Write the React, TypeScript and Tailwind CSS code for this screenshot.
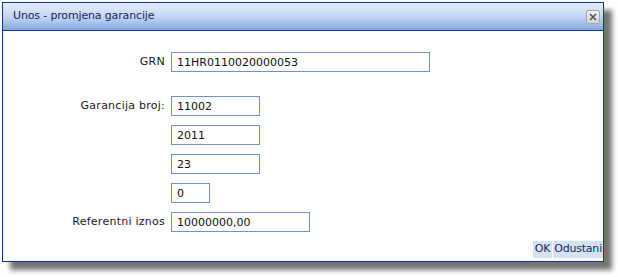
export default function App() {
  const rows = [
    { label: "Garancija broj:", value: "11002", width: "w-[89px]" },
    { label: "", value: "2011", width: "w-[89px]" },
    { label: "", value: "23", width: "w-[89px]" },
    { label: "", value: "0", width: "w-[39px]" },
    { label: "Referentni iznos", value: "10000000,00", width: "w-[139px]" },
  ];

  return (
    <div className="w-[618px] h-[277px] bg-white pt-[2px] pl-[2px] font-['DejaVu_Sans',sans-serif] text-[11px]">
      <div className="w-[602px] h-[260px] flex flex-col bg-white border border-[#0d3697] shadow-[8px_8px_5px_rgba(0,0,0,0.55)]">
        {/* title bar */}
        <div className="h-[28px] shrink-0 flex items-center justify-between pl-[10px] pr-[3px] border-b border-[#0d3697] bg-gradient-to-b from-[#e2edfd] via-[#c3d8f6] to-[#86a9e2]">
          <span className="text-[#241c58] tracking-[-0.15px] pb-[1px]">Unos - promjena garancije</span>
          <button className="w-[14px] h-[14px] flex items-center justify-center rounded-[2px] border border-[#a3a7ad] bg-gradient-to-b from-[#f1f1f1] to-[#d6d6d6]">
            <svg width="8" height="8" viewBox="0 0 8 8">
              <path d="M1 1L7 7M7 1L1 7" stroke="#555" strokeWidth="1.6" />
            </svg>
          </button>
        </div>

        {/* form */}
        <div className="grid grid-cols-[162px_auto] gap-x-[6px] items-center mt-[21px] text-[#1b1b1b]">
          <label className="text-right tracking-[0.3px]">GRN</label>
          <input
            readOnly
            value="11HR0110020000053"
            className="w-[259px] h-[20px] px-[5px] border border-[#7092d0] outline-none text-[11px] text-[#111]"
          />
        </div>
        <div className="grid grid-cols-[162px_auto] gap-x-[6px] gap-y-[9px] items-center mt-[24px] text-[#1b1b1b]">
          {rows.map((r, i) => (
            <div key={i} className="contents">
              <label className="text-right tracking-[0.25px]">{r.label}</label>
              <input
                readOnly
                value={r.value}
                className={`${r.width} h-[20px] px-[5px] border border-[#7092d0] outline-none text-[11px] text-[#111]`}
              />
            </div>
          ))}
        </div>

        {/* buttons */}
        <div className="mt-auto mb-[3px] flex justify-end gap-[1px]">
          <button className="h-[17px] px-[2px] bg-[#d5e2f4] text-[#1b2660] text-[11px] tracking-[-0.2px]">OK</button>
          <button className="h-[17px] px-[1px] bg-[#d5e2f4] text-[#1b2660] text-[11px] tracking-[-0.2px]">Odustani</button>
        </div>
      </div>
    </div>
  );
}
